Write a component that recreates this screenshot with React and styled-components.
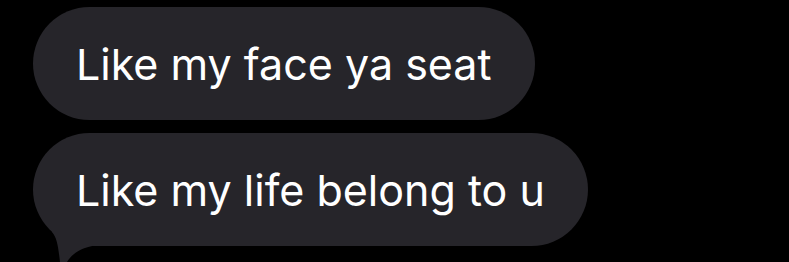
import React from 'react';
import styled, { createGlobalStyle } from 'styled-components';

const GlobalStyle = createGlobalStyle`
  html, body {
    margin: 0;
    padding: 0;
    background: #000;
    overflow: hidden;
  }
`;

const Thread = styled.div`
  width: 789px;
  height: 262px;
  background: #000;
  display: flex;
  flex-direction: column;
  align-items: flex-start;
  gap: 13px;
  padding: 7px 0 0 33px;
  box-sizing: border-box;
  overflow: hidden;
`;

const Bubble = styled.div`
  position: relative;
  height: 113px;
  display: flex;
  align-items: center;
  padding: 0 43px 0 43px;
  box-sizing: border-box;
  border-radius: 57px;
  background: #26252a;
  color: #fff;
  font-family: Inter, "Noto Sans", sans-serif;
  font-size: 43px;
  white-space: nowrap;
`;

// the little tail hanging off the last bubble's bottom-left corner
const Tail = styled.svg`
  position: absolute;
  left: 0;
  bottom: -16px;
  width: 80px;
  height: 36px;
`;

const messages = ['Like my face ya seat', 'Like my life belong to u'];

export default function App() {
  return (
    <>
      <GlobalStyle />
      <Thread>
        {messages.map((text, i) => (
          <Bubble key={i}>
            {text}
            {i === messages.length - 1 && (
              <Tail viewBox="0 0 80 36">
                <path
                  d="M19 0 L19 6 C24 12 25 19 27 36 L34 36 C39 28 47 22 62 19.5 L62 0 Z"
                  fill="#26252a"
                />
              </Tail>
            )}
          </Bubble>
        ))}
      </Thread>
    </>
  );
}
